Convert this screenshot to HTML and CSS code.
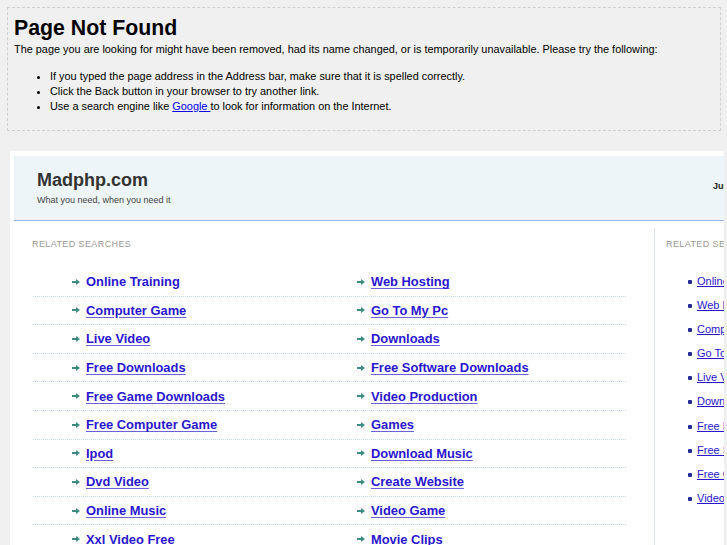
FILE: index.html
```html
<!DOCTYPE html>
<html>
<head>
<meta charset="utf-8">
<title>Page Not Found</title>
<link rel="stylesheet" href="styles.css">
</head>
<body>
<div class="notice">
  <h1>Page Not Found</h1>
  <p>The page you are looking for might have been removed, had its name changed, or is temporarily unavailable. Please try the following:</p>
  <ul>
    <li>If you typed the page address in the Address bar, make sure that it is spelled correctly.</li>
    <li>Click the Back button in your browser to try another link.</li>
    <li>Use a search engine like <a href="#">Google </a> to look for information on the Internet.</li>
  </ul>
</div>

<div class="frame">
  <div class="panel">
    <header class="masthead">
      <div class="brand">
        <div class="name">Madphp.com</div>
        <div class="tag">What you need, when you need it</div>
      </div>
      <div class="date">June 14, 2011</div>
    </header>
    <div class="content">
      <main class="main">
        <h2 class="label">RELATED SEARCHES</h2>
        <div class="links">
          <div class="row"><a class="cell plain" href="#"><svg class="arr" viewBox="0 0 8 8"><path d="M0 3h4V1l4 3-4 3V5H0z"/></svg><span>Online Training</span></a><a class="cell" href="#"><svg class="arr" viewBox="0 0 8 8"><path d="M0 3h4V1l4 3-4 3V5H0z"/></svg><span>Web Hosting</span></a></div>
          <div class="row"><a class="cell" href="#"><svg class="arr" viewBox="0 0 8 8"><path d="M0 3h4V1l4 3-4 3V5H0z"/></svg><span>Computer Game</span></a><a class="cell" href="#"><svg class="arr" viewBox="0 0 8 8"><path d="M0 3h4V1l4 3-4 3V5H0z"/></svg><span>Go To My Pc</span></a></div>
          <div class="row"><a class="cell" href="#"><svg class="arr" viewBox="0 0 8 8"><path d="M0 3h4V1l4 3-4 3V5H0z"/></svg><span>Live Video</span></a><a class="cell" href="#"><svg class="arr" viewBox="0 0 8 8"><path d="M0 3h4V1l4 3-4 3V5H0z"/></svg><span>Downloads</span></a></div>
          <div class="row"><a class="cell" href="#"><svg class="arr" viewBox="0 0 8 8"><path d="M0 3h4V1l4 3-4 3V5H0z"/></svg><span>Free Downloads</span></a><a class="cell" href="#"><svg class="arr" viewBox="0 0 8 8"><path d="M0 3h4V1l4 3-4 3V5H0z"/></svg><span>Free Software Downloads</span></a></div>
          <div class="row"><a class="cell" href="#"><svg class="arr" viewBox="0 0 8 8"><path d="M0 3h4V1l4 3-4 3V5H0z"/></svg><span>Free Game Downloads</span></a><a class="cell" href="#"><svg class="arr" viewBox="0 0 8 8"><path d="M0 3h4V1l4 3-4 3V5H0z"/></svg><span>Video Production</span></a></div>
          <div class="row"><a class="cell" href="#"><svg class="arr" viewBox="0 0 8 8"><path d="M0 3h4V1l4 3-4 3V5H0z"/></svg><span>Free Computer Game</span></a><a class="cell" href="#"><svg class="arr" viewBox="0 0 8 8"><path d="M0 3h4V1l4 3-4 3V5H0z"/></svg><span>Games</span></a></div>
          <div class="row"><a class="cell" href="#"><svg class="arr" viewBox="0 0 8 8"><path d="M0 3h4V1l4 3-4 3V5H0z"/></svg><span>Ipod</span></a><a class="cell" href="#"><svg class="arr" viewBox="0 0 8 8"><path d="M0 3h4V1l4 3-4 3V5H0z"/></svg><span>Download Music</span></a></div>
          <div class="row"><a class="cell" href="#"><svg class="arr" viewBox="0 0 8 8"><path d="M0 3h4V1l4 3-4 3V5H0z"/></svg><span>Dvd Video</span></a><a class="cell" href="#"><svg class="arr" viewBox="0 0 8 8"><path d="M0 3h4V1l4 3-4 3V5H0z"/></svg><span>Create Website</span></a></div>
          <div class="row"><a class="cell" href="#"><svg class="arr" viewBox="0 0 8 8"><path d="M0 3h4V1l4 3-4 3V5H0z"/></svg><span>Online Music</span></a><a class="cell" href="#"><svg class="arr" viewBox="0 0 8 8"><path d="M0 3h4V1l4 3-4 3V5H0z"/></svg><span>Video Game</span></a></div>
          <div class="row"><a class="cell" href="#"><svg class="arr" viewBox="0 0 8 8"><path d="M0 3h4V1l4 3-4 3V5H0z"/></svg><span>Xxl Video Free</span></a><a class="cell" href="#"><svg class="arr" viewBox="0 0 8 8"><path d="M0 3h4V1l4 3-4 3V5H0z"/></svg><span>Movie Clips</span></a></div>
        </div>
      </main>
      <aside class="side">
        <h2 class="label">RELATED SEARCHES</h2>
        <ul class="sidelist">
          <li><a href="#">Online Training</a></li>
          <li><a href="#">Web Hosting</a></li>
          <li><a href="#">Computer Game</a></li>
          <li><a href="#">Go To My Pc</a></li>
          <li><a href="#">Live Video</a></li>
          <li><a href="#">Downloads</a></li>
          <li><a href="#">Free Downloads</a></li>
          <li><a href="#">Free Software Downloads</a></li>
          <li><a href="#">Free Game Downloads</a></li>
          <li><a href="#">Video Production</a></li>
        </ul>
      </aside>
    </div>
  </div>
</div>
</body>
</html>
```
FILE: styles.css
```css
html, body {
  margin: 0;
  padding: 0;
  background: #f0f0f0;
  font-family: "Liberation Sans", Arial, sans-serif;
  color: #000;
}

.notice {
  margin: 7px 6px 0 7px;
  border: 1px dashed #cfcfcf;
  padding: 8px 6px 12px 6px;
  font-size: 10.9px;
  height: 102px;
}

.notice h1 {
  margin: 0;
  font-size: 21.3px;
  line-height: 25px;
  font-weight: bold;
}

.notice p {
  margin: 1px 0 0 0;
  line-height: 15px;
}

.notice ul {
  margin: 12px 0 0 0;
  padding-left: 36px;
}

.notice li {
  line-height: 15px;
}

.notice a {
  color: #0000ee;
}

.frame {
  margin: 20px 3px 0 10px;
  background: #fff;
  overflow: hidden;
  height: 420px;
}

.panel {
  width: 1000px;
  padding: 5px 4px 0 4px;
}

.masthead {
  display: flex;
  background: #eef5f8;
  border-bottom: 1px solid #93b4e6;
  height: 65px;
  box-sizing: border-box;
  padding: 14px 0 0 23px;
}

.brand {
  width: 676px;
}

.name {
  font-size: 18px;
  font-weight: bold;
  line-height: 20px;
  color: #333;
}

.tag {
  font-size: 9px;
  line-height: 12px;
  margin-top: 4px;
  color: #444;
}

.date {
  font-size: 9px;
  font-weight: bold;
  color: #222;
  padding-top: 11px;
  white-space: nowrap;
}

.content {
  display: flex;
  padding-top: 7px;
}

.main {
  width: 640px;
}

.label {
  margin: 0;
  font-size: 9px;
  font-weight: normal;
  line-height: 12px;
  letter-spacing: 0.4px;
  color: #999;
  padding-top: 10px;
}

.main .label {
  padding-left: 18px;
}

.links {
  margin: 18px 0 0 19px;
  width: 593px;
}

.row {
  display: flex;
  height: 28.6px;
  box-sizing: border-box;
  border-bottom: 1px dotted #c4d5ee;
  padding-left: 22px;
  align-items: center;
}

.cell {
  width: 285px;
  box-sizing: border-box;
  padding-left: 17px;
  display: flex;
  align-items: center;
  gap: 6px;
  font-size: 12.9px;
  font-weight: bold;
  color: #2a16d0;
  text-decoration: none;
}

.cell span {
  text-decoration: underline;
  text-decoration-color: #6b60e0;
  text-underline-offset: 2px;
}

.cell.plain span {
  text-decoration: none;
}

.arr {
  width: 8px;
  height: 8px;
  fill: #3d8c84;
  flex: none;
}

.side {
  border-left: 1px solid #dde7f5;
  padding-left: 11px;
  width: 200px;
  min-height: 400px;
}

.sidelist {
  list-style: none;
  margin: 24px 0 0 0;
  padding: 0 0 0 22px;
}

.sidelist li {
  position: relative;
  height: 24.1px;
  font-size: 11px;
  line-height: 14px;
  padding-left: 9px;
  white-space: nowrap;
}

.sidelist li::before {
  content: "";
  position: absolute;
  left: 0;
  top: 6px;
  width: 4px;
  height: 4px;
  border-radius: 1px;
  background: #232c9a;
}

.sidelist a {
  color: #2a16d0;
  text-underline-offset: 1px;
}
```
